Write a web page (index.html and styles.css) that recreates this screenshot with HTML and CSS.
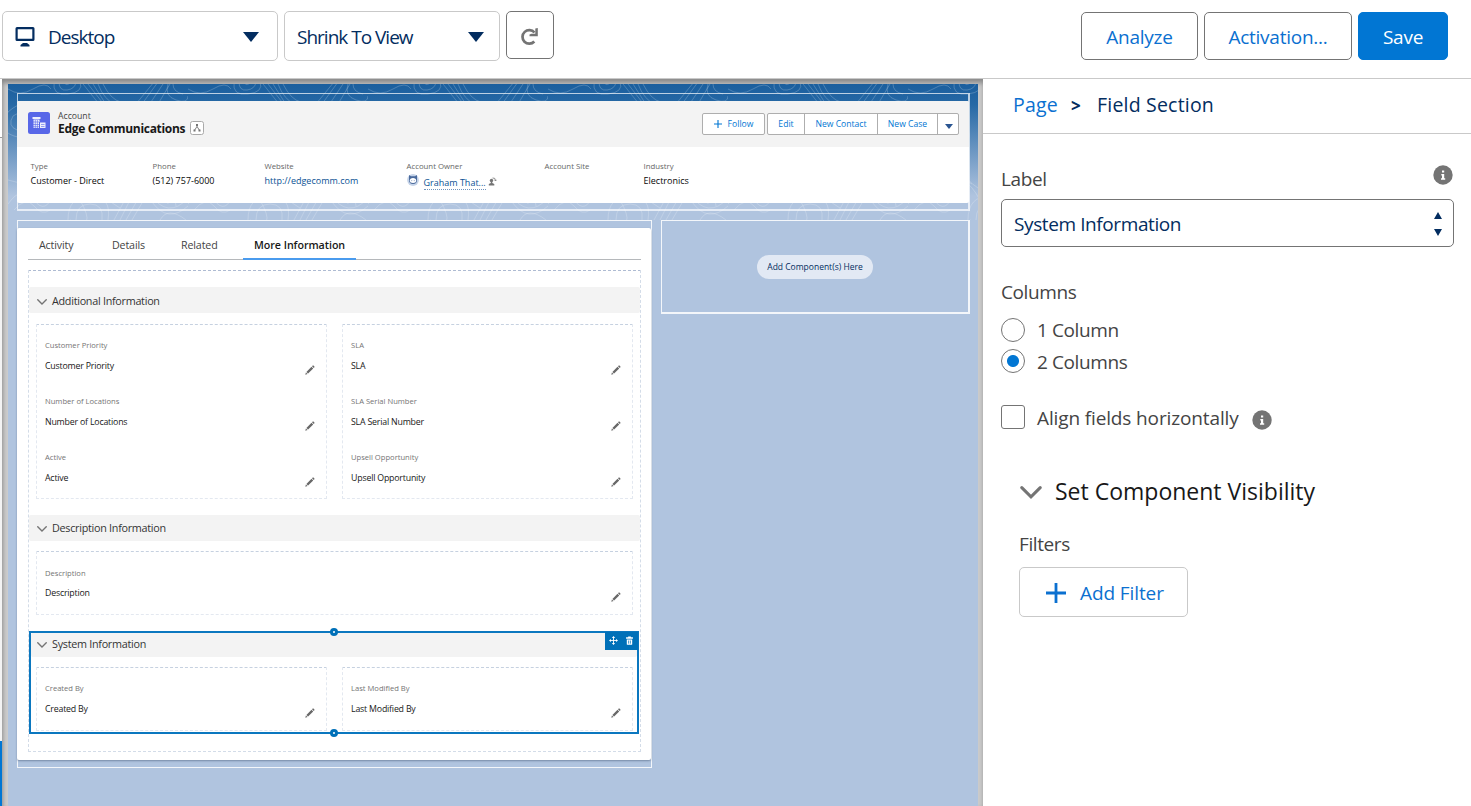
FILE: index.html
```html
<!DOCTYPE html>
<html lang="en">
<head>
    <meta charset="utf-8">
    <title>Lightning App Builder</title>
    <link rel="stylesheet" href="styles.css">
</head>
<body>
    <!-- shared icons -->
    <svg class="defs" width="0" height="0">
        <symbol id="pencil" viewBox="0 0 10 10">
            <path d="M.3 9.700l.6-2.300 1.700 1.700zM1.400 6.900l5.100-5.100 1.700 1.700-5.100 5.100zM7 1.300l.7-.7q.4-.3.800 0l.9.9q.3.400 0 .8l-.7.7z"/>
        </symbol>
        <symbol id="chevron" viewBox="0 0 20 12">
            <path d="M1.500 1.500L10 10l8.500-8.500" fill="none" stroke="currentColor" stroke-width="2.800" stroke-linecap="round"/>
        </symbol>
        <symbol id="info" viewBox="0 0 20 20">
            <circle cx="10" cy="10" r="9.700" fill="#747474"/>
            <path d="M9 5.500h2.200v2H9zM8.300 9h2.900v4.300h1v1.400H8v-1.400h1v-2.900h-.7z" fill="#fff"/>
        </symbol>
        <symbol id="plus" viewBox="0 0 20 20">
            <path d="M10 0v20M0 10h20" stroke="currentColor" stroke-width="2.800"/>
        </symbol>
        <symbol id="down" viewBox="0 0 16 10">
            <path d="M0 0h16L8 10z" fill="currentColor"/>
        </symbol>
    </svg>

    <header class="toolbar">
        <div class="picker device">
            <svg class="monitor" viewBox="0 0 20 20"><path d="M2 0h16q1.500 0 1.500 1.500v11q0 1.500-1.500 1.500H2Q.5 14 .5 12.500v-11Q.5 0 2 0zm.7 2.200v9.600h14.600V2.200zM8 16h4l2.500 2v1.500h-9V18z" fill="#032d60" fill-rule="evenodd"/></svg>
            <span>Desktop</span>
            <svg class="down"><use href="#down"/></svg>
        </div>
        <div class="picker zoom">
            <span>Shrink To View</span>
            <svg class="down"><use href="#down"/></svg>
        </div>
        <div class="refresh">
            <svg viewBox="0 0 20 20" width="20" height="20"><path d="M14.300 14.500A6.800 6.800 0 1 1 14.500 5.500" fill="none" stroke="#747474" stroke-width="2.700"/><path d="M17.800 1v8.300H9.500V7.500l2-.8h3.800V1.500z" fill="#747474"/></svg>
        </div>
        <div class="actions">
            <div class="btn analyze">Analyze</div>
            <div class="btn activation">Activation...</div>
            <div class="btn save">Save</div>
        </div>
    </header>

    <main class="builder">
        <div class="edge"><i class="edge-top"></i><i class="edge-mid"></i><i class="edge-low"></i></div>
        <div class="canvas">
            <div class="page">
                <svg class="topo" width="970" height="136">
                    <defs>
                        <pattern id="contours" width="180" height="136" patternUnits="userSpaceOnUse">
                            <g fill="none" stroke="#fff" stroke-opacity=".25" stroke-width=".8">
                                <path d="M0 5q12 8 25 0t18 0M46-2q-2 14 14 12t12-12M51-2q0 9 8 8t9-8M56-2q2 5 7 0M75 0l16 20M80 0l14 18M85 0l14 22M90 0q6 16 18 21M95 0q8 16 18 18M128 20l18-22M134 20l16-22M141 21L155 0M150 20L162 0M160 0q-4 12 8 16t12-4M165 0q0 8 10 10"/>
                                <path d="M0 28q20-18 38 0t2 24-34 0-6-24M5 32q14-10 26 0t0 14-22 0-4-14M50 30q10 20 0 40t14 30M56 30q10 22 0 40t14 34M80 26q30 30 0 60M98 30q26 24 4 50t10 44M140 30q-20 30 0 50t20 40M148 30q-18 30 0 48t20 44"/>
                                <path d="M0 120q14-20 26-4t20-8 26 8-10 20M6 126q12-14 20-4t16 4M60 136q0-24 22-24t18 24M68 136q0-16 14-16t12 16M106 136l14-26M112 136l14-28M118 136l16-28M124 136l14-24M142 110q18 26 38 4M144 118q16 22 36 4M152 136q8-14 26 0M0 96q20 8 30-10t20 0"/>
                            </g>
                        </pattern>
                    </defs>
                    <rect width="970" height="136" fill="url(#contours)"/>
                </svg>

                <section class="region header-region">
                    <div class="record">
                        <div class="record-head">
                            <svg class="account" viewBox="0 0 22 22"><rect width="22" height="22" rx="2.500" fill="#5867e8"/><path d="M4.500 5h8v2h-8zM5.500 7.500h6V10H11v6H5.500zM12 10.500h5.500v5.500H12z" fill="#fff" fill-opacity=".9"/><path d="M7.300 8v8M9.400 8v8M5 10h6M5 12.500h6M5 14.700h6M13 12.500h3.500M13 14.500h3.500" stroke="#5867e8" stroke-width=".6"/></svg>
                            <div class="record-name">
                                <div class="kind">Account</div>
                                <div class="name">Edge Communications
                                    <svg class="hierarchy" viewBox="0 0 14 14"><rect x=".5" y=".5" width="13" height="13" rx="2" fill="#fff" stroke="#aaa"/><path d="M7 4v1.500L4.700 9M7 5.500L9.300 9" fill="none" stroke="#747474" stroke-width=".9"/><path d="M6 3h2v2H6zM3.500 8.500h2v2h-2zM8.500 8.500h2v2h-2z" fill="#747474"/></svg>
                                </div>
                            </div>
                            <div class="record-actions">
                                <div class="follow"><svg><use href="#plus"/></svg>Follow</div>
                                <div class="group">
                                    <div class="g-edit">Edit</div>
                                    <div class="g-contact">New Contact</div>
                                    <div class="g-case">New Case</div>
                                    <div class="g-more"><svg><use href="#down"/></svg></div>
                                </div>
                            </div>
                        </div>
                        <div class="highlights">
                            <div><label>Type</label><p>Customer - Direct</p></div>
                            <div><label>Phone</label><p>(512) 757-6000</p></div>
                            <div><label>Website</label><p class="link">http://edgecomm.com</p></div>
                            <div>
                                <label>Account Owner</label>
                                <p class="owner">
                                    <svg class="avatar" viewBox="0 0 12 12"><circle cx="6" cy="6" r="5.900" fill="#c5d3e8"/><path d="M2 1l2 1.200h4L10 1v5a4 4 0 1 1-8 0z" fill="#4a6a9c"/><ellipse cx="6" cy="6.600" rx="3.200" ry="2.500" fill="#fff"/><path d="M4.700 6.300v.8M7.300 6.300v.8" stroke="#4a6a9c" stroke-width=".7"/></svg>
                                    <span class="link">Graham That...</span>
                                    <svg class="change" viewBox="0 0 9 9"><circle cx="3.500" cy="3.500" r="1.700" fill="#747474"/><path d="M.8 8.500V7l2-1V4.500h1.500V6l2 1v1.500z" fill="#747474"/><path d="M4.500 1q3-.5 3 2.500M6.500 2.800l1 1.200 1-1.200" fill="none" stroke="#747474" stroke-width=".8"/></svg>
                                </p>
                            </div>
                            <div><label>Account Site</label></div>
                            <div><label>Industry</label><p>Electronics</p></div>
                        </div>
                    </div>
                </section>

                <div class="columns">
                    <section class="region main-region">
                        <div class="card">
                            <nav class="tabs">
                                <span class="t1">Activity</span>
                                <span class="t2">Details</span>
                                <span class="t3">Related</span>
                                <span class="t4 active">More Information</span>
                            </nav>
                            <div class="tab-body">
                                <div class="section">
                                    <h3><svg><use href="#chevron"/></svg>Additional Information</h3>
                                    <div class="boxes">
                                        <div class="box">
                                            <div class="field"><label>Customer Priority</label><p>Customer Priority</p><svg><use href="#pencil"/></svg></div>
                                            <div class="field"><label>Number of Locations</label><p>Number of Locations</p><svg><use href="#pencil"/></svg></div>
                                            <div class="field"><label>Active</label><p>Active</p><svg><use href="#pencil"/></svg></div>
                                        </div>
                                        <div class="box">
                                            <div class="field"><label>SLA</label><p>SLA</p><svg><use href="#pencil"/></svg></div>
                                            <div class="field"><label>SLA Serial Number</label><p>SLA Serial Number</p><svg><use href="#pencil"/></svg></div>
                                            <div class="field"><label>Upsell Opportunity</label><p>Upsell Opportunity</p><svg><use href="#pencil"/></svg></div>
                                        </div>
                                    </div>
                                </div>
                                <div class="section description">
                                    <h3><svg><use href="#chevron"/></svg>Description Information</h3>
                                    <div class="boxes">
                                        <div class="box">
                                            <div class="field"><label>Description</label><p>Description</p><svg><use href="#pencil"/></svg></div>
                                        </div>
                                    </div>
                                </div>
                                <div class="section selected">
                                    <h3><svg><use href="#chevron"/></svg>System Information</h3>
                                    <div class="boxes">
                                        <div class="box">
                                            <div class="field"><label>Created By</label><p>Created By</p><svg><use href="#pencil"/></svg></div>
                                        </div>
                                        <div class="box">
                                            <div class="field"><label>Last Modified By</label><p>Last Modified By</p><svg><use href="#pencil"/></svg></div>
                                        </div>
                                    </div>
                                    <div class="tools">
                                        <svg viewBox="0 0 10 10"><path d="M5 1v8M1 5h8" stroke="#fff" stroke-width="1"/><path d="M5 0l1.800 2.200H3.200zM5 10l1.800-2.200H3.200zM0 5l2.200-1.800v3.600zM10 5L7.800 3.200v3.600z" fill="#fff"/></svg>
                                        <svg viewBox="0 0 10 10"><path d="M1.200 1.500h2.300V.5h3v1h2.300V3H1.200zM2 3.800h6v5.400q0 .6-.6.6H2.600q-.6 0-.6-.6z" fill="#fff"/><path d="M4 5v3.500M6 5v3.500" stroke="#0070b8" stroke-width=".8"/></svg>
                                    </div>
                                    <i class="handle handle-top"></i>
                                    <i class="handle handle-bottom"></i>
                                </div>
                            </div>
                        </div>
                    </section>
                    <section class="region side-region"><span class="add-here">Add Component(s) Here</span></section>
                </div>
            </div>
        </div>

        <aside class="props">
            <div class="crumbs"><a>Page</a><b>&gt;</b><span>Field Section</span></div>
            <div class="form">
                <div class="label-row"><span>Label</span><svg class="info"><use href="#info"/></svg></div>
                <div class="select">System Information
                    <svg width="8" height="24" viewBox="0 0 8 24"><path d="M4 0l4 7H0zM4 24l4-7H0z" fill="#032d60"/></svg>
                </div>
                <div class="legend">Columns</div>
                <div class="option"><i class="radio"></i>1 Column</div>
                <div class="option"><i class="radio on"></i>2 Columns</div>
                <div class="option align"><i class="check"></i><span>Align fields horizontally</span><svg class="info"><use href="#info"/></svg></div>
                <div class="visibility">
                    <h2><svg><use href="#chevron"/></svg>Set Component Visibility</h2>
                    <div class="filters">Filters</div>
                    <div class="add-filter"><svg><use href="#plus"/></svg>Add Filter</div>
                </div>
            </div>
        </aside>
    </main>
</body>
</html>
```

FILE: styles.css
```css
* { box-sizing: border-box; }
body { margin: 0; height: 806px; overflow: hidden; background: #fff; color: #444; font-family: 'Segoe UI', 'Open Sans', 'Noto Sans', sans-serif; font-size: 19px; }
p, h2, h3 { margin: 0; font-weight: 400; }
svg { flex: none; display: block; }
.defs { position: absolute; }

/* toolbar */
.toolbar { display: flex; height: 79px; padding: 11px 23px 0 2px; border-bottom: 1px solid #c9c9c9; color: #032d60; }
.picker { display: flex; align-items: center; height: 50px; padding: 2px 18px 0 12px; border: 1px solid #c9c9c9; border-radius: 5px; letter-spacing: -1px; }
.picker .down { width: 16px; height: 10px; margin-left: auto; }
.device { width: 276px; margin-right: 6px; }
.zoom { width: 216px; margin-right: 6px; padding-right: 15px; }
.monitor { width: 20px; height: 20px; margin-right: 13px; }
.refresh { width: 48px; height: 48px; border: 1px solid #747474; border-radius: 5px; padding: 15px 13px; }
.actions { display: flex; gap: 6px; margin: 1px 0 0 auto; }
.btn { height: 48px; line-height: 48px; border: 1px solid #747474; border-radius: 5px; text-align: center; color: #0b70d0; letter-spacing: -0.25px; }
.analyze { width: 117px; }
.activation { width: 148px; }
.save { width: 90px; background: #0176d3; border-color: #0176d3; color: #fff; }

/* canvas */
.builder { display: flex; height: 727px; }
.edge { width: 2px; display: flex; flex-direction: column; background: #f3f3f3; }
.edge-top { height: 59px; background: #fff; border-bottom: 1px solid #999; }
.edge-mid { flex: 1; }
.edge-low { height: 65px; background: #0176d3; }
.canvas { width: 981px; padding: 5px 5px 0 6px; background: #cbcbcb; box-shadow: inset 0 5px 5px -1px #8a8a8a, inset 3px 0 3px -1px #b0b0b0; }
.page { position: relative; height: 722px; padding: 9px 7px 0 9px; background: linear-gradient(#1b5f9e, #2568a5 20px, #b0c4df 112px); }
.topo { position: absolute; top: 0; left: 0; }
.region { position: relative; border: 1px solid rgba(255, 255, 255, .85); }
.header-region { width: 953px; height: 118px; padding-top: 7px; border-width: 1px 2px 2px 1px; border-color: rgba(255, 255, 255, .7); }
.record { height: 102px; margin: 0 -1px; background: #fff; border-radius: 2px; overflow: hidden; }
.record-head { display: flex; height: 46px; padding: 11px 10px 0 11px; background: #f3f3f3; }
.account { width: 22px; height: 22px; margin-right: 8px; }
.kind { font-size: 8.700px; line-height: 11px; margin-top: -1px; }
.name { display: flex; align-items: center; font-size: 12px; line-height: 15px; margin-top: -1px; font-weight: 700; color: #181818; letter-spacing: -0.3px; }
.hierarchy { width: 14px; height: 14px; margin-left: 5px; margin-top: -1px; }
.record-actions { display: flex; gap: 2px; margin-left: auto; margin-top: 1px; font-size: 8.600px; line-height: 20px; color: #0176d3; }
.follow { display: flex; align-items: center; justify-content: center; width: 63px; height: 22px; border: 1px solid #aeaeae; border-radius: 2px; background: #fff; }
.follow svg { width: 8px; height: 8px; margin-right: 6px; }
.group { display: flex; height: 22px; border: 1px solid #aeaeae; border-radius: 2px; background: #fff; text-align: center; }
.group div + div { border-left: 1px solid #aeaeae; }
.g-edit { width: 36px; }
.g-contact { width: 73px; }
.g-case { width: 60px; }
.g-more { width: 21px; color: #2a5591; }
.g-more svg { width: 8px; height: 5px; margin: 10px auto 0 7px; }
.highlights { display: grid; grid-template-columns: 122px 112px 142px 138px 99px 1fr; padding: 13px 13px 0 13.500px; }
.highlights label { display: block; font-size: 7.800px; line-height: 12px; color: #666; }
.highlights p { font-size: 9px; line-height: 15px; margin-top: 1px; color: #080808; }
.highlights .link { color: #0b5294; }
.owner { display: flex; }
.owner .link { line-height: 13px; height: 14px; margin-top: 3px; border-bottom: 1px dotted #6f93bd; }
.avatar { width: 12px; height: 12px; margin-right: 5px; margin-top: 1px; }
.change { width: 9px; height: 9px; margin: 4px 0 0 2px; }

.columns { display: flex; gap: 9px; margin-top: 9px; align-items: flex-start; }
.main-region { width: 635px; height: 548px; padding-top: 7px; }
.side-region { width: 309px; height: 94px; border-width: 1px 2px 2px 1px; display: flex; align-items: center; justify-content: center; }
.add-here { width: 116px; height: 24px; line-height: 24px; border-radius: 12px; background: #e2e9f4; text-align: center; font-size: 8.500px; color: #032d60; }
.card { height: 532px; margin: 0 0 0 -1px; padding: 0 10px 0 11px; background: #fff; border-radius: 2px; box-shadow: 0 1px 2px rgba(60, 80, 110, .5); }
.tabs { display: flex; height: 32px; line-height: 34px; border-bottom: 1px solid #b5b8bb; font-size: 10.700px; letter-spacing: -0.15px; }
.tabs span { padding-left: 11px; height: 32px; }
.t1 { width: 73px; }
.t2 { width: 69px; }
.t3 { width: 73px; }
.t4 { width: 113px; }
.tabs .active { font-weight: 600; color: #181818; border-bottom: 2px solid #4a9bee; letter-spacing: -0.05px; }

.tab-body { height: 482px; margin-top: 10px; padding-top: 16px; border: 1px dashed #d3dce8; border-top: 1px dashed #aebbd2; }
.section { position: relative; }
.section h3 { display: flex; align-items: center; height: 26px; padding: 1px 0 0 8px; background: #f3f3f3; font-size: 10.800px; color: #333; border-radius: 2px; letter-spacing: -0.28px; }
.section h3 svg { width: 10px; height: 6px; margin: 2px 5px 0 0; color: #747474; }
.boxes { display: flex; gap: 15px; padding: 11px 7px 0; }
.box { flex: 1; padding: 8px 8px 0; border: 1px dashed #e3e8f0; border-top-color: #c6d1e0; height: 175px; }
.field { display: grid; grid-template-columns: 1fr 10px; grid-template-rows: 24px 32px; padding-right: 3px; }
.field label { grid-column: 1 / 3; font-size: 7.600px; line-height: 24px; color: #747474; }
.field p { font-size: 8.800px; line-height: 18px; color: #181818; letter-spacing: -0.2px; }
.field svg { width: 10px; height: 10px; margin-top: 8px; fill: #686868; }
.description { margin-top: 16px; }
.description h3 { padding: 0 0 1px 8px; }
.description .box, .selected .box { height: 64px; }
.description .boxes { padding-top: 10px; }
.description .box { padding-top: 9px; }
.description .field { grid-template-rows: 23px 32px; }
.selected { height: 103px; margin: 16px 1px 0 0; border: 2px solid #0b77bf; }
.selected h3 { height: 24px; padding: 0 0 3px 6px; }
.selected .boxes { padding: 10px 4px 0 5px; }

/* selection controls */
.tools { position: absolute; top: -1px; right: -1px; display: flex; gap: 7px; width: 33px; height: 18px; padding: 4px 0 0 4px; background: #0070b8; }
.tools svg { width: 9px; height: 9px; }
.handle { position: absolute; left: 50%; width: 8px; height: 8px; margin-left: -4px; border: 3px solid #0070b8; border-radius: 50%; background: #fff; }
.handle-top { top: -5px; }
.handle-bottom { bottom: -5px; }

/* properties */
.props { flex: 1; background: #fff; }
.crumbs { display: flex; height: 55px; line-height: 52px; padding-left: 30px; border-bottom: 1px solid #c9c9c9; color: #032d60; font-size: 19.500px; letter-spacing: 0.2px; }
.crumbs a { width: 58px; color: #0b70d0; }
.crumbs b { width: 26px; font-size: 17px; line-height: 53px; }
.form { padding: 0 17px 0 18px; letter-spacing: -0.4px; }
.label-row { display: flex; height: 65px; padding-top: 30px; line-height: 30px; justify-content: space-between; }
.info { width: 20px; height: 20px; }
.label-row .info { margin: 1px 1px 0 0; }
.select { display: flex; align-items: center; justify-content: space-between; height: 48px; padding: 1px 11px 0 12px; border: 1px solid #747474; border-radius: 5px; color: #032d60; }
.legend { margin-top: 30px; line-height: 30px; height: 37px; }
.option { display: flex; align-items: center; height: 32px; line-height: 28px; }
.radio { width: 24px; height: 24px; margin: 0 12px 0 0; border: 1px solid #747474; border-radius: 50%; }
.radio.on { margin-top: -2px; background: radial-gradient(circle, #0176d3 5.500px, #fff 6.500px); }
.check { width: 24px; height: 24px; margin: -2px 12px 0 0; border: 1px solid #747474; border-radius: 3px; }
.align { margin-top: 24px; letter-spacing: -0.13px; }
.align .info { margin: 3px 0 0 13px; }
.visibility { padding: 38px 0 0 18px; }
.visibility h2 { display: flex; align-items: center; height: 36px; padding-top: 1px; font-size: 23px; color: #181818; letter-spacing: 0; }
.visibility h2 svg { width: 22px; height: 13px; margin: 4px 13px 0 1px; color: #747474; }
.filters { margin-top: 21px; line-height: 30px; height: 38px; }
.add-filter { display: flex; align-items: center; width: 169px; height: 50px; padding: 1px 0 0 26px; border: 1px solid #c9c9c9; border-radius: 5px; color: #0b70d0; letter-spacing: -0.1px; }
.add-filter svg { width: 20px; height: 20px; margin-right: 14px; }
```
